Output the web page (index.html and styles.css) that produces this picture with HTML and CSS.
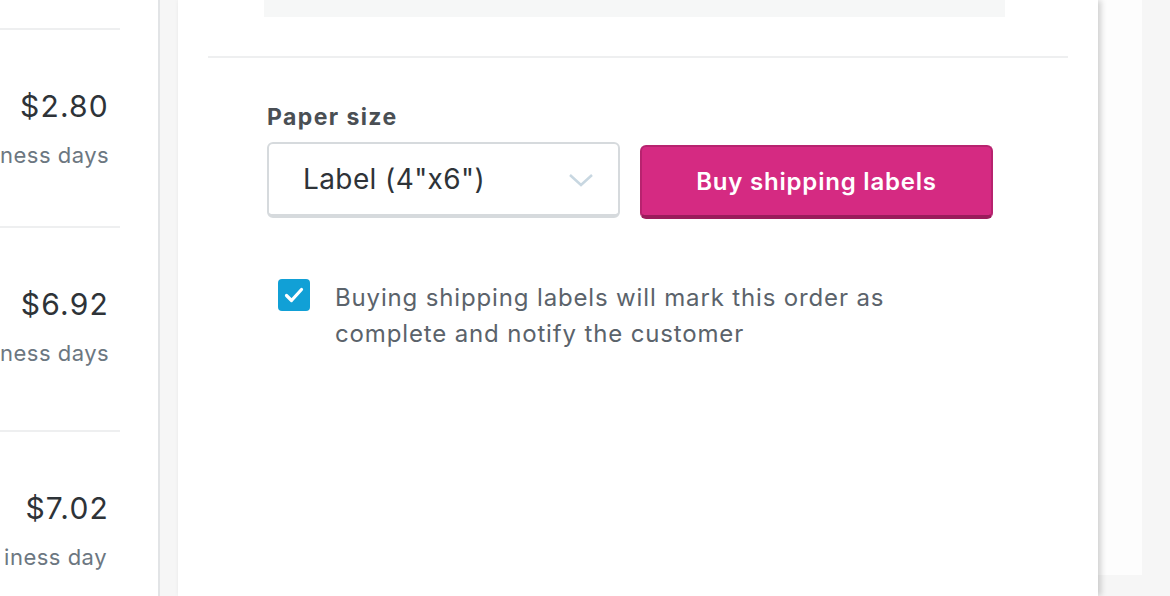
FILE: index.html
```html
<!DOCTYPE html>
<html lang="en">
<head>
    <meta charset="UTF-8">
    <meta name="viewport" content="width=device-width, initial-scale=1.0">
    <title>Purchase shipping labels</title>
    <link rel="stylesheet" href="styles.css">
</head>
<body>
    <div class="page">
        <aside class="rates">
            <ul class="rate-list">
                <li class="rate">
                    <div class="rate-price">$2.80</div>
                    <div class="rate-days">ness days</div>
                </li>
                <li class="rate rate--tall">
                    <div class="rate-price">$6.92</div>
                    <div class="rate-days">ness days</div>
                </li>
                <li class="rate">
                    <div class="rate-price">$7.02</div>
                    <div class="rate-days">iness day</div>
                </li>
            </ul>
        </aside>

        <main class="modal">
            <div class="preview"></div>
            <hr class="divider">

            <section class="purchase">
                <label class="field-label" for="paper-size">Paper size</label>
                <div class="purchase-row">
                    <div class="select">
                        <select id="paper-size">
                            <option>Label (4"x6")</option>
                            <option>Letter (8.5"x11")</option>
                        </select>
                        <svg class="select-chevron" width="26" height="16" viewBox="0 0 26 16">
                            <path d="M2 3l11 10 11-10" fill="none" stroke="#c8d7e1" stroke-width="2.5"/>
                        </svg>
                    </div>
                    <button class="buy-button" type="button">Buy shipping labels</button>
                </div>

                <label class="notice">
                    <span class="checkbox">
                        <svg width="20" height="16" viewBox="0 0 20 16">
                            <path d="M2.5 8.5l5 5 10-11" fill="none" stroke="#fff" stroke-width="3.2" stroke-linecap="round" stroke-linejoin="round"/>
                        </svg>
                    </span>
                    <span class="notice-text">Buying shipping labels will mark this order as complete and notify the customer</span>
                </label>
            </section>
        </main>

        <div class="backdrop-card"></div>
    </div>
</body>
</html>
```

FILE: styles.css
```css
body {
    margin: 0;
    background-color: #f6f6f6;
    font-family: Inter, "Noto Sans", sans-serif;
    overflow: hidden;
}

.page {
    display: flex;
    align-items: flex-start;
    height: 596px;
    overflow: hidden;
}

/* left column: rates list behind the modal */
.rates {
    width: 158px;
    height: 100%;
    background-color: #fff;
    border-right: 2px solid #e2e4e6;
    flex-shrink: 0;
    overflow: hidden;
}

.rate-list {
    list-style: none;
    margin: 28px 0 0;
    padding: 0;
    width: 120px;
}

.rate {
    border-top: 2px solid #eeeff0;
    padding: 58px 13px 56px 0;
    text-align: right;
    white-space: nowrap;
    overflow: hidden;
}

.rate--tall {
    padding-bottom: 62px;
}

.rate-price {
    margin-right: -2px;
    font-size: 30px;
    line-height: 36px;
    letter-spacing: 1.2px;
    color: #2e3338;
}

.rate-days {
    margin-top: 16px;
    font-size: 22px;
    line-height: 30px;
    letter-spacing: 0.5px;
    color: #6c7781;
}

/* modal */
.modal {
    width: 860px;
    height: 596px;
    margin-left: 18px;
    padding: 0 30px;
    background-color: #fff;
    box-shadow: 3px 0 6px rgba(0, 0, 0, 0.18);
    flex-shrink: 0;
    position: relative;
    z-index: 1;
}

.preview {
    height: 17px;
    margin: 0 63px 0 56px;
    background-color: #f6f7f7;
}

.divider {
    margin: 39px 0 0;
    border: none;
    border-top: 2px solid #eeeff0;
}

.purchase {
    padding: 44px 0 0 59px;
}

.field-label {
    display: block;
    font-size: 23px;
    line-height: 30px;
    font-weight: 700;
    letter-spacing: 1.4px;
    color: #4a4f54;
}

.purchase-row {
    display: flex;
    align-items: flex-start;
    gap: 20px;
    margin-top: 10px;
}

.select {
    position: relative;
    width: 353px;
}

.select select {
    appearance: none;
    -webkit-appearance: none;
    display: block;
    width: 100%;
    height: 76px;
    padding: 0 60px 0 34px;
    border: 2px solid #d6dadd;
    border-bottom-width: 4px;
    border-radius: 6px;
    background-color: #fff;
    font-family: inherit;
    font-size: 28px;
    letter-spacing: 0.4px;
    color: #2e3338;
}

.select-chevron {
    position: absolute;
    right: 26px;
    top: 30px;
    pointer-events: none;
}

.buy-button {
    width: 353px;
    height: 74px;
    margin-top: 3px;
    padding: 0;
    border: 2px solid #b7236f;
    border-bottom: 4px solid #9b1c5c;
    border-radius: 6px;
    background-color: #d52a82;
    color: #fff;
    font-family: inherit;
    font-size: 24px;
    font-weight: 600;
    letter-spacing: 0.8px;
    cursor: pointer;
}

.notice {
    display: flex;
    align-items: flex-start;
    gap: 25px;
    margin-top: 61px;
    padding-left: 11px;
    width: 660px;
}

.checkbox {
    display: flex;
    align-items: center;
    justify-content: center;
    width: 32px;
    height: 32px;
    margin-top: -1px;
    flex-shrink: 0;
    border-radius: 4px;
    background-color: #11a0d6;
}

.notice-text {
    font-size: 24px;
    line-height: 36px;
    letter-spacing: 0.85px;
    color: #5b636b;
}

.backdrop-card {
    width: 44px;
    height: 575px;
    background-color: #fdfdfd;
    flex-shrink: 0;
}
```
